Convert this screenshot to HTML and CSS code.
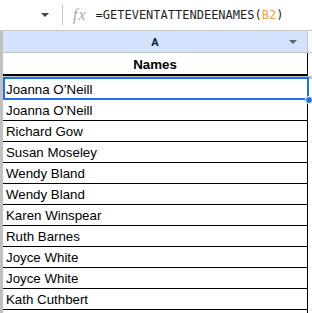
FILE: index.html
```html
<!DOCTYPE html>
<html lang="en">

<head>
    <meta charset="UTF-8">
    <meta name="viewport" content="width=device-width, initial-scale=1.0">
    <title>Sheet</title>
    <link rel="stylesheet" href="styles.css">
</head>

<body>
    <div class="formula-bar">
        <span class="caret"></span>
        <span class="divider"></span>
        <span class="fx">fx</span>
        <span class="formula">=GETEVENTATTENDEENAMES(<span class="ref">B2</span>)</span>
    </div>

    <div class="sheet">
        <div class="row col-header">
            <div class="gutter"></div>
            <div class="cell">A<span class="caret small"></span></div>
            <div class="rest"></div>
        </div>

        <div class="row title-row">
            <div class="gutter"></div>
            <div class="cell">Names</div>
            <div class="rest"></div>
        </div>

        <div class="freeze"></div>

        <div class="row data-row selected">
            <div class="gutter"></div>
            <div class="cell">Joanna O’Neill<span class="handle"></span></div>
            <div class="rest"></div>
        </div>
        <div class="row data-row">
            <div class="gutter"></div>
            <div class="cell">Joanna O’Neill</div>
            <div class="rest"></div>
        </div>
        <div class="row data-row">
            <div class="gutter"></div>
            <div class="cell">Richard Gow</div>
            <div class="rest"></div>
        </div>
        <div class="row data-row">
            <div class="gutter"></div>
            <div class="cell">Susan Moseley</div>
            <div class="rest"></div>
        </div>
        <div class="row data-row">
            <div class="gutter"></div>
            <div class="cell">Wendy Bland</div>
            <div class="rest"></div>
        </div>
        <div class="row data-row">
            <div class="gutter"></div>
            <div class="cell">Wendy Bland</div>
            <div class="rest"></div>
        </div>
        <div class="row data-row">
            <div class="gutter"></div>
            <div class="cell">Karen Winspear</div>
            <div class="rest"></div>
        </div>
        <div class="row data-row">
            <div class="gutter"></div>
            <div class="cell">Ruth Barnes</div>
            <div class="rest"></div>
        </div>
        <div class="row data-row">
            <div class="gutter"></div>
            <div class="cell">Joyce White</div>
            <div class="rest"></div>
        </div>
        <div class="row data-row">
            <div class="gutter"></div>
            <div class="cell">Joyce White</div>
            <div class="rest"></div>
        </div>
        <div class="row data-row">
            <div class="gutter"></div>
            <div class="cell">Kath Cuthbert</div>
            <div class="rest"></div>
        </div>
        <div class="row data-row">
            <div class="gutter"></div>
            <div class="cell"></div>
            <div class="rest"></div>
        </div>
    </div>
</body>
</html>
```

FILE: styles.css
```css
:root {
    --grid-gray: #c4c7c5;
    --gutter-gray: #c0c0c0;
    --header-blue: #d3e3fd;
    --select-blue: #1a73e8;
    --text-dark: #1f1f1f;
}

* {
    box-sizing: border-box;
    margin: 0;
    padding: 0;
}

body {
    font-family: "Liberation Sans", Arial, sans-serif;
    background-color: white;
    width: 312px;
    height: 313px;
    overflow: hidden;
    color: black;
}

.formula-bar {
    height: 30px;
    display: flex;
    align-items: center;
    padding-left: 41px;
    background-color: white;
}

.caret {
    width: 0;
    height: 0;
    border-left: 4px solid transparent;
    border-right: 4px solid transparent;
    border-top: 4px solid #444746;
}

.divider {
    width: 1px;
    height: 20px;
    background-color: var(--grid-gray);
    margin-left: 13px;
}

.fx {
    font-family: "Liberation Serif", serif;
    font-style: italic;
    font-size: 16px;
    color: #a8a8a8;
    margin-left: 10px;
    letter-spacing: 1px;
}

.formula {
    font-family: "DejaVu Sans Mono", monospace;
    font-size: 12px;
    color: var(--text-dark);
    margin-left: 9px;
}

.formula .ref {
    color: #f4a04a;
}

.sheet {
    height: 283px;
    overflow: hidden;
}

.row {
    display: flex;
}

.gutter {
    width: 3px;
    flex: none;
    background-color: var(--gutter-gray);
}

.cell {
    width: 305px;
    flex: none;
    position: relative;
    border-right: 1px solid black;
}

.rest {
    flex: 1;
    background-color: white;
}

.col-header {
    height: 23px;
    border-top: 1px solid var(--grid-gray);
}

.col-header .cell {
    background-color: var(--header-blue);
    border-right: 1px solid var(--grid-gray);
    border-bottom: 1px solid var(--grid-gray);
    font-family: Roboto, sans-serif;
    font-size: 11px;
    font-weight: 700;
    color: #041e49;
    display: flex;
    align-items: center;
    justify-content: center;
    padding-top: 2px;
}

.col-header .rest {
    background-color: #f8f9fa;
    border-bottom: 1px solid var(--grid-gray);
}

.caret.small {
    position: absolute;
    right: 10px;
    top: 9px;
    border-top-color: #5f6368;
}

.title-row {
    height: 23px;
}

.title-row .cell {
    border-bottom: 2px solid black;
    font-size: 13.3px;
    font-weight: 700;
    text-align: center;
    line-height: 18px;
    padding-top: 3px;
}

.freeze {
    height: 3px;
    background-color: var(--gutter-gray);
}

.data-row {
    height: 21px;
}

.data-row .cell {
    border-bottom: 1px solid black;
    font-size: 13.3px;
    line-height: 18px;
    padding-top: 2px;
    padding-left: 3px;
}

.selected .cell {
    border: 2px solid var(--select-blue);
    margin-top: -2px;
    height: 23px;
    line-height: 18px;
    padding-top: 2px;
    padding-left: 1px;
    width: 306px;
}

.selected .rest {
    margin-left: -1px;
}

.handle {
    position: absolute;
    right: -6px;
    bottom: -6px;
    width: 8px;
    height: 8px;
    border-radius: 50%;
    background-color: var(--select-blue);
    border: 1px solid white;
    z-index: 2;
}
```
